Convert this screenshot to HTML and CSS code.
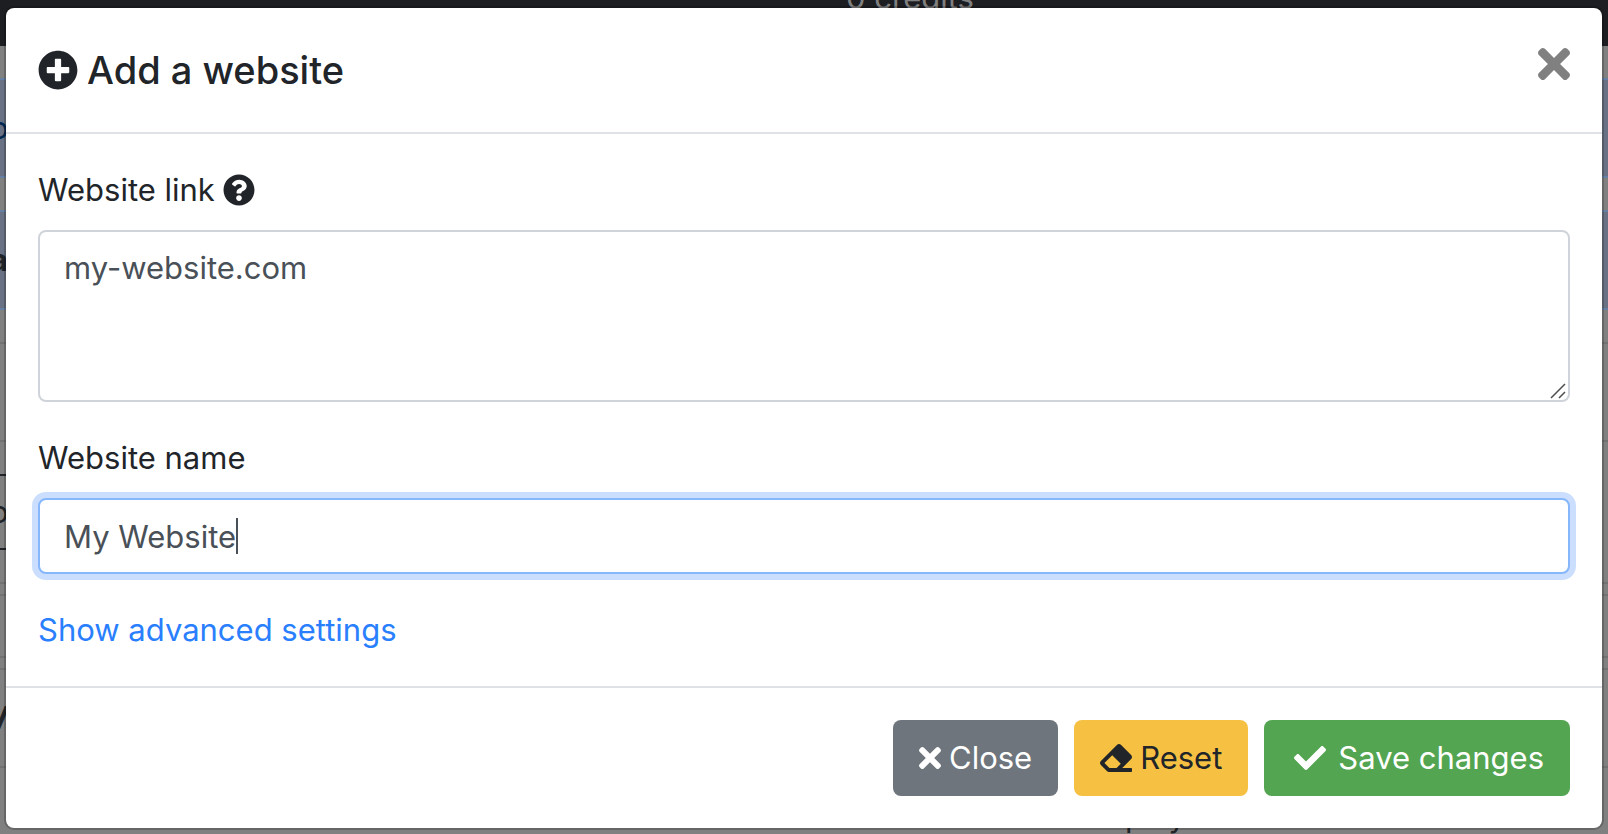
FILE: index.html
```html
<!DOCTYPE html>
<html lang="en">
<head>
<meta charset="utf-8">
<meta name="viewport" content="width=device-width, initial-scale=1">
<title>Add a website</title>
<link rel="stylesheet" href="styles.css">
</head>
<body>
<div class="page" aria-hidden="true">
  <div class="navbar"><span class="credits">0 credits</span></div>
  <div class="row gap-row"></div>
  <div class="row info"><span class="peek navy">o</span></div>
  <div class="row gap-row"></div>
  <div class="row info"><span class="peek bold">a</span></div>
  <div class="row gap-row"></div>
  <div class="row tall ruled"></div>
  <div class="row head-row ruled"></div>
  <div class="row field"><span class="peek">o</span></div>
  <div class="row gap-row"></div>
  <div class="row slim ruled"></div>
  <div class="row toggle ruled"></div>
  <div class="row slim ruled"></div>
  <div class="row tall ruled"><span class="peek bold italic">W</span></div>
  <div class="row last ruled"><span class="display-text">No website to display</span></div>
</div>
<div class="backdrop">
  <form class="modal" role="dialog" aria-modal="true" aria-labelledby="modal-title">
    <header class="modal-header">
      <h1 class="modal-title" id="modal-title">
        <svg class="icon icon-title" viewBox="0 0 512 512" aria-hidden="true"><path d="M256 8C119 8 8 119 8 256s111 248 248 248 248-111 248-248S393 8 256 8zm144 276c0 6.600-5.400 12-12 12h-92v92c0 6.600-5.400 12-12 12h-56c-6.600 0-12-5.400-12-12v-92h-92c-6.600 0-12-5.400-12-12v-56c0-6.600 5.400-12 12-12h92v-92c0-6.600 5.400-12 12-12h56c6.600 0 12 5.400 12 12v92h92c6.600 0 12 5.400 12 12v56z"/></svg>
        Add a website
      </h1>
      <button class="dismiss" type="button" aria-label="Close dialog">
        <svg class="icon icon-dismiss" viewBox="0 80 352 352" aria-hidden="true"><path d="M242.720 256l100.070-100.070c12.280-12.280 12.280-32.190 0-44.480l-22.240-22.240c-12.280-12.280-32.190-12.280-44.480 0L176 189.280 75.930 89.210c-12.280-12.280-32.190-12.280-44.480 0L9.210 111.450c-12.280 12.280-12.280 32.190 0 44.480L109.280 256 9.210 356.070c-12.280 12.280-12.280 32.190 0 44.480l22.240 22.240c12.280 12.280 32.200 12.280 44.480 0L176 322.720l100.070 100.070c12.280 12.280 32.200 12.280 44.480 0l22.240-22.240c12.280-12.280 12.280-32.190 0-44.480L242.720 256z"/></svg>
      </button>
    </header>
    <div class="modal-body">
      <div class="form-group">
        <label class="label" for="link">Website link
          <svg class="icon icon-help" viewBox="0 0 512 512" aria-hidden="true"><path d="M504 256c0 136.997-111.043 248-248 248S8 392.997 8 256C8 119.083 119.043 8 256 8s248 111.083 248 248zM262.655 90c-54.497 0-89.255 22.957-116.549 63.758-3.536 5.286-2.353 12.415 2.715 16.258l34.699 26.310c5.205 3.947 12.621 3.008 16.665-2.122 17.864-22.658 30.113-35.797 57.303-35.797 20.429 0 45.698 13.148 45.698 32.958 0 14.976-12.363 22.667-32.534 33.976C247.128 238.528 216 254.941 216 296v4c0 6.627 5.373 12 12 12h56c6.627 0 12-5.373 12-12v-1.333c0-28.462 83.186-29.647 83.186-106.667 0-58.002-60.165-102-116.531-102zM256 338c-25.365 0-46 20.635-46 46 0 25.364 20.635 46 46 46s46-20.636 46-46c0-25.365-20.635-46-46-46z"/></svg>
        </label>
        <div class="textarea-wrap">
          <textarea class="control textarea" id="link" spellcheck="false">my-website.com</textarea>
          <svg class="grip" viewBox="0 0 16 16" aria-hidden="true"><path d="M1 15L15 1M9 15L15 9"/></svg>
        </div>
      </div>
      <div class="form-group">
        <label class="label" for="name">Website name</label>
        <input class="control name" id="name" type="text" value="My Website" autocomplete="off" autofocus>
      </div>
      <a class="advanced" href="#advanced">Show advanced settings</a>
    </div>
    <footer class="modal-footer">
      <button class="btn btn-close" type="button">
        <svg class="icon icon-times" viewBox="0 80 352 352" aria-hidden="true"><path d="M242.720 256l100.070-100.070c12.280-12.280 12.280-32.190 0-44.480l-22.240-22.240c-12.280-12.280-32.190-12.280-44.480 0L176 189.280 75.930 89.210c-12.280-12.280-32.190-12.280-44.480 0L9.210 111.450c-12.280 12.280-12.280 32.190 0 44.480L109.280 256 9.210 356.070c-12.280 12.280-12.280 32.190 0 44.480l22.240 22.240c12.280 12.280 32.200 12.280 44.480 0L176 322.720l100.070 100.070c12.280 12.280 32.200 12.280 44.480 0l22.240-22.240c12.280-12.280 12.280-32.190 0-44.480L242.720 256z"/></svg>
        Close
      </button>
      <button class="btn btn-reset" type="reset">
        <svg class="icon icon-wide" viewBox="0 0 512 512" aria-hidden="true"><path d="M497.941 273.941c18.745-18.745 18.745-49.137 0-67.882l-160-160c-18.745-18.745-49.136-18.746-67.883 0l-256 256c-18.745 18.745-18.745 49.137 0 67.882l96 96A48.004 48.004 0 0 0 144 480h356c6.627 0 12-5.373 12-12v-40c0-6.627-5.373-12-12-12H355.883l142.058-142.059zm-302.627-62.627l137.373 137.373L265.373 416H150.628l-80-80 124.686-124.686z"/></svg>
        Reset
      </button>
      <button class="btn btn-save" type="submit">
        <svg class="icon icon-wide icon-check" viewBox="0 0 512 512" aria-hidden="true"><path d="M173.898 439.404l-166.400-166.400c-9.997-9.997-9.997-26.206 0-36.204l36.203-36.204c9.997-9.998 26.207-9.998 36.204 0L192 312.690 432.095 72.596c9.997-9.997 26.207-9.997 36.204 0l36.203 36.204c9.997 9.997 9.997 26.206 0 36.204l-294.400 294.401c-9.998 9.997-26.207 9.997-36.204-.001z"/></svg>
        Save changes
      </button>
    </footer>
  </form>
</div>
</body>
</html>
```

FILE: styles.css
```css
* {
  box-sizing: border-box;
}

body {
  margin: 0;
  min-height: 100vh;
  overflow: hidden;
  background: #808080;
  color: #212529;
  font-family: Inter, "Liberation Sans", sans-serif;
  font-size: 31px;
  line-height: 48px;
}

/* Dimmed page behind the dialog */
.page {
  position: absolute;
  inset: 0;
  overflow: hidden;
}

.navbar {
  display: flex;
  justify-content: center;
  height: 46px;
  padding-left: 212px;
  background: #1d1e22;
  color: #808080;
}

.credits {
  margin-top: -26px;
}

.row {
  display: flex;
  align-items: center;
  height: 100px;
}

.gap-row {
  height: 32px;
}

.head-row {
  height: 34px;
}

.slim {
  height: 12px;
}

.tall {
  height: 98px;
}

.info {
  border: solid #6580a3;
  border-width: 2px 0;
  background: #687284;
}

.ruled {
  border-top: 2px solid #727374;
}

.field {
  width: 50%;
  height: 76px;
  border: solid #212529;
  border-width: 2px 0;
}

.toggle {
  height: 62px;
}

.last {
  flex-direction: column;
  align-items: center;
  justify-content: flex-end;
  height: 74px;
  padding-left: 450px;
}

.peek {
  margin-left: -10px;
}

.navy {
  color: #002752;
}

.bold {
  font-weight: 700;
}

.italic {
  margin-left: -24px;
  font-style: italic;
}

/* Dialog */
.backdrop {
  position: relative;
  padding: 6px 4px 4px;
}

.modal {
  border: 2px solid rgba(0, 0, 0, 0.2);
  border-radius: 10px;
  background: #fff;
  background-clip: padding-box;
}

.modal-header {
  display: flex;
  align-items: flex-start;
  justify-content: space-between;
  padding: 32px;
  border-bottom: 2px solid #dee2e6;
}

.modal-title {
  display: flex;
  align-items: center;
  gap: 9px;
  margin: 0;
  font-size: 38px;
  font-weight: 500;
  line-height: 60px;
}

.icon {
  display: block;
  flex: none;
  fill: currentColor;
}

.icon-title {
  width: 40px;
  height: 40px;
}

.dismiss {
  margin: 0;
  padding: 8px 0;
  border: 0;
  background: none;
  color: #808080;
  cursor: pointer;
}

.icon-dismiss {
  width: 32px;
  height: 32px;
}

.modal-body {
  padding: 32px;
}

.form-group {
  margin-bottom: 32px;
}

.label {
  display: flex;
  align-items: center;
  gap: 8px;
  margin-bottom: 16px;
}

.icon-help {
  width: 32px;
  height: 32px;
}

.control {
  display: block;
  width: 100%;
  height: 76px;
  padding: 12px 24px;
  border: 2px solid #ced4da;
  border-radius: 8px;
  background: #fff;
  color: #495057;
  font: inherit;
}

.control:focus {
  border-color: #86b7fa;
  outline: 0;
  box-shadow: 0 0 0 6px #cbdefe;
}

/* Steady, non-blinking caret after the name */
.name {
  background: linear-gradient(#495057, #495057) 196px center / 2px 36px no-repeat #fff;
  caret-color: transparent;
}

.textarea-wrap {
  position: relative;
}

.textarea {
  height: 172px;
  resize: vertical;
}

.textarea::-webkit-resizer {
  background: transparent;
}

.grip {
  position: absolute;
  right: 4px;
  bottom: 3px;
  width: 16px;
  height: 16px;
  fill: none;
  stroke: #4d4d4d;
  stroke-width: 1.5;
  pointer-events: none;
}

.advanced {
  display: block;
  width: fit-content;
  color: #2a7fff;
  text-decoration: none;
}

.modal-footer {
  display: flex;
  justify-content: flex-end;
  gap: 16px;
  padding: 32px;
  border-top: 2px solid #dee2e6;
}

.btn {
  display: flex;
  align-items: center;
  gap: 8px;
  padding: 14px 26px;
  border: 0;
  border-radius: 8px;
  color: #fff;
  font: inherit;
  white-space: nowrap;
  cursor: pointer;
}

.btn-close {
  background: #6e757c;
}

.btn-reset {
  background: #f6c143;
  color: #212529;
}

.btn-save {
  gap: 12px;
  padding-left: 30px;
  background: #53a551;
}

.icon-times {
  width: 22px;
  height: 22px;
}

.icon-wide {
  width: 32px;
  height: 32px;
}
```
